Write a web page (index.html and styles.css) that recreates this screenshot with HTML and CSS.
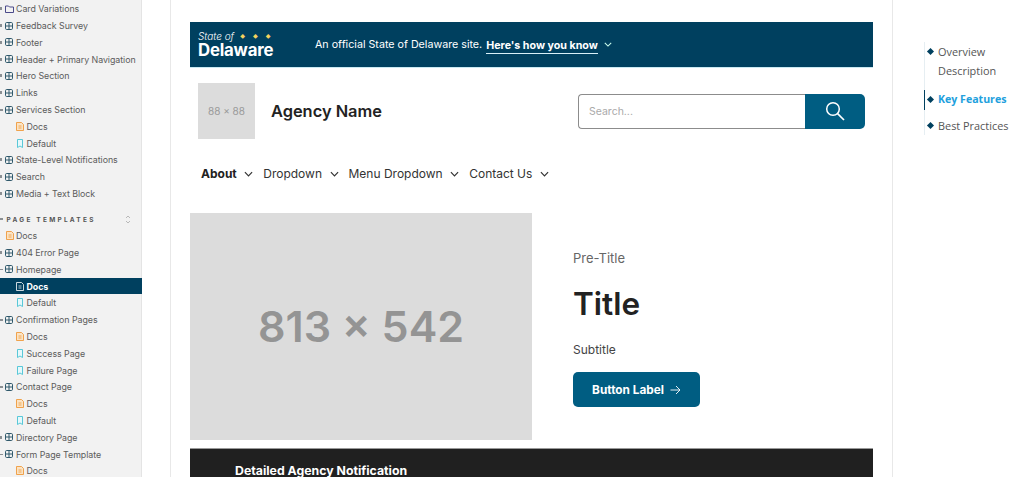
FILE: index.html
```html
<!DOCTYPE html>
<html lang="en">
<head>
<meta charset="utf-8">
<title>Homepage Docs</title>
<link rel="stylesheet" href="styles.css">
</head>
<body>
<svg class="defs" width="0" height="0" aria-hidden="true">
  <symbol id="comp" viewBox="0 0 8 8"><rect x=".5" y=".5" width="7" height="7" rx="1.2" fill="none" stroke="currentColor"/><path d="M4 .5v7M.5 4h7" stroke="currentColor" fill="none"/></symbol>
  <symbol id="doc" viewBox="0 0 8 9"><path d="M.5.5h5l2 2v6h-7z" fill="#fbe3c4" stroke="currentColor" stroke-width=".9"/><path d="M2.5 4h3M2.5 6h3" stroke="currentColor" stroke-width=".8"/></symbol>
  <symbol id="doc-on" viewBox="0 0 8 9"><path d="M.5.5h5l2 2v6h-7z" fill="none" stroke="currentColor" stroke-width=".8"/><path d="M2.500 4h3M2.500 6h3" stroke="currentColor" stroke-width=".7"/></symbol>
  <symbol id="story" viewBox="0 0 6 9"><path d="M.5.5h5v8l-2.5-1.5-2.5 1.5z" fill="#e6f8fb" stroke="currentColor" stroke-width=".9"/></symbol>
  <symbol id="folder" viewBox="0 0 9 8"><path d="M.5 1h3l1 1h4v5.500h-8z" fill="none" stroke="currentColor"/></symbol>
  <symbol id="chev" viewBox="0 0 10 6"><path d="M1 1l4 4 4-4" fill="none" stroke="currentColor" stroke-width="1.300"/></symbol>
  <symbol id="updown" viewBox="0 0 6 9"><path d="M1 3l2-2 2 2M1 6l2 2 2-2" fill="none" stroke="currentColor" stroke-width=".8"/></symbol>
</svg>
<div class="app">
  <nav class="sidebar">
    <a class="row"><i class="caret"></i><svg class="ic folder"><use href="#folder"/></svg>Card Variations</a>
    <a class="row"><i class="caret"></i><svg class="ic comp"><use href="#comp"/></svg>Feedback Survey</a>
    <a class="row"><i class="caret"></i><svg class="ic comp"><use href="#comp"/></svg>Footer</a>
    <a class="row"><i class="caret"></i><svg class="ic comp"><use href="#comp"/></svg>Header + Primary Navigation</a>
    <a class="row"><i class="caret"></i><svg class="ic comp"><use href="#comp"/></svg>Hero Section</a>
    <a class="row"><i class="caret"></i><svg class="ic comp"><use href="#comp"/></svg>Links</a>
    <a class="row"><i class="caret open"></i><svg class="ic comp"><use href="#comp"/></svg>Services Section</a>
    <a class="row sub"><svg class="ic doc"><use href="#doc"/></svg>Docs</a>
    <a class="row sub"><svg class="ic story"><use href="#story"/></svg>Default</a>
    <a class="row"><i class="caret"></i><svg class="ic comp"><use href="#comp"/></svg>State-Level Notifications</a>
    <a class="row"><i class="caret"></i><svg class="ic comp"><use href="#comp"/></svg>Search</a>
    <a class="row"><i class="caret"></i><svg class="ic comp"><use href="#comp"/></svg>Media + Text Block</a>
    <div class="group"><i class="caret open"></i><span>PAGE TEMPLATES</span><svg class="updown"><use href="#updown"/></svg></div>
    <a class="row top"><svg class="ic doc"><use href="#doc"/></svg>Docs</a>
    <a class="row"><i class="caret"></i><svg class="ic comp"><use href="#comp"/></svg>404 Error Page</a>
    <a class="row"><i class="caret open"></i><svg class="ic comp"><use href="#comp"/></svg>Homepage</a>
    <a class="row sub active"><svg class="ic doc"><use href="#doc-on"/></svg>Docs</a>
    <a class="row sub"><svg class="ic story"><use href="#story"/></svg>Default</a>
    <a class="row"><i class="caret open"></i><svg class="ic comp"><use href="#comp"/></svg>Confirmation Pages</a>
    <a class="row sub"><svg class="ic doc"><use href="#doc"/></svg>Docs</a>
    <a class="row sub"><svg class="ic story"><use href="#story"/></svg>Success Page</a>
    <a class="row sub"><svg class="ic story"><use href="#story"/></svg>Failure Page</a>
    <a class="row"><i class="caret open"></i><svg class="ic comp"><use href="#comp"/></svg>Contact Page</a>
    <a class="row sub"><svg class="ic doc"><use href="#doc"/></svg>Docs</a>
    <a class="row sub"><svg class="ic story"><use href="#story"/></svg>Default</a>
    <a class="row"><i class="caret"></i><svg class="ic comp"><use href="#comp"/></svg>Directory Page</a>
    <a class="row"><i class="caret open"></i><svg class="ic comp"><use href="#comp"/></svg>Form Page Template</a>
    <a class="row sub"><svg class="ic doc"><use href="#doc"/></svg>Docs</a>
  </nav>
  <main class="canvas">
    <article class="panel">
      <div class="banner">
        <div class="logo">
          <div class="logo-top"><em>State of</em><span class="stars">&#9670;&#9670;&#9670;</span></div>
          <div class="logo-name">Delaware</div>
        </div>
        <p class="official">An official State of Delaware site. <b>Here's how you know</b><svg class="chev-sm"><use href="#chev"/></svg></p>
      </div>
      <header class="masthead">
        <div class="brand">
          <div class="ph-logo">88 × 88</div>
          <div class="agency">Agency Name</div>
        </div>
        <form class="search">
          <div class="search-input">Search...</div>
          <div class="search-btn"><svg width="20" height="20" viewBox="0 0 20 20"><circle cx="8" cy="8" r="6.300" fill="none" stroke="#fff" stroke-width="1.500"/><path d="M12.600 12.600L19 19" stroke="#fff" stroke-width="1.700" fill="none"/></svg></div>
        </form>
      </header>
      <ul class="menu">
        <li class="cur">About<svg class="chev"><use href="#chev"/></svg></li>
        <li>Dropdown<svg class="chev"><use href="#chev"/></svg></li>
        <li>Menu Dropdown<svg class="chev"><use href="#chev"/></svg></li>
        <li>Contact Us<svg class="chev"><use href="#chev"/></svg></li>
      </ul>
      <section class="hero">
        <div class="ph-hero">813 × 542</div>
        <div class="hero-copy">
          <div class="pre">Pre-Title</div>
          <h1>Title</h1>
          <div class="subtitle">Subtitle</div>
          <a class="btn">Button Label<svg width="11" height="10" viewBox="0 0 11 10"><path d="M.5 5h9.500M6 1l4 4-4 4" fill="none" stroke="#fff" stroke-width=".9"/></svg></a>
        </div>
      </section>
      <div class="notice">Detailed Agency Notification</div>
    </article>
    <aside class="toc">
      <ul>
        <li>Overview Description</li>
        <li class="on">Key Features</li>
        <li>Best Practices</li>
      </ul>
    </aside>
  </main>
</div>
</body>
</html>
```
FILE: styles.css
```css
* { box-sizing: border-box; }
html, body { margin: 0; height: 477px; overflow: hidden; background: #fff; }
body { font-family: "Inter", "Liberation Sans", sans-serif; color: #222; }
.defs { position: absolute; }
.app { display: flex; height: 477px; overflow: hidden; }

.sidebar { width: 142px; flex: none; background: #f2f2f2; border-right: 1px solid #e4e4e4; padding-top: .3px; font-size: 8.850px; color: #5c5c5c; }
.row { display: flex; align-items: center; height: 16.800px; padding-left: 16px; white-space: nowrap; position: relative; letter-spacing: -.05px; }
.row.sub { padding-left: 26.500px; }
.row.active { background: #00405f; color: #fff; font-weight: 700; margin-right: -1px; }
.row.active .doc { color: #fff; }
.caret { position: absolute; left: 0; top: 7px; width: 2px; height: 3px; background: #8a8f93; }
.caret.open { width: 3px; height: 1.500px; top: 8px; }
.ic { flex: none; position: absolute; }
.comp { left: 5px; top: 4.500px; width: 8px; height: 8px; color: #315a6c; }
.folder { left: 5px; top: 4.500px; width: 9px; height: 8px; color: #4b4a8a; }
.doc { left: 16px; top: 4px; width: 8px; height: 9px; color: #ee9a3b; }
.row.top .doc { left: 6px; }
.story { left: 17px; top: 4px; width: 6px; height: 9px; color: #48c3d4; }
.group { height: 25.400px; padding: 14px 0 0 6.500px; font-size: 6.500px; font-weight: 700; letter-spacing: 2.250px; color: #555; position: relative; display: flex; }
.group .caret { top: 16.500px; }
.updown { position: absolute; left: 125px; top: 13.500px; width: 6px; height: 9px; color: #aaa; }

.canvas { flex: 1; display: flex; align-items: flex-start; min-width: 0; background: #fff; }
.panel { width: 723px; margin-left: 28px; height: 477px; flex: none; padding: 22px 19px 0 19px; border-left: 1px solid #e8e8e8; border-right: 1px solid #e8e8e8; overflow: hidden; }

.banner { height: 45px; background: #00405f; display: flex; align-items: center; padding-left: 8px; color: #fff; box-shadow: 0 1px 0 #c9e9f2; }
.logo { width: 117px; flex: none; }
.logo-top { display: flex; align-items: center; gap: 6px; font-size: 10px; line-height: 11px; }
.logo-top em { font-weight: 300; }
.stars { color: #f4d35e; font-size: 5px; letter-spacing: 7.500px; }
.logo-name { font-size: 16.800px; font-weight: 700; line-height: 16px; letter-spacing: -.2px; }
.official { margin: 0; font-size: 10.700px; display: flex; align-items: center; gap: 3px; white-space: nowrap; }
.official b { border-bottom: 1px solid #d8f0f8; padding: 3px 0 1px; margin-left: 1px; }
.chev-sm { width: 8px; height: 5px; margin-left: 3px; color: #cfe; }

.masthead { display: flex; justify-content: space-between; align-items: center; padding: 16px 8px 0 8px; }
.brand { display: flex; align-items: center; gap: 16px; }
.ph-logo { width: 57px; height: 56px; background: #dcdcdc; color: #999; font-size: 10px; display: flex; align-items: center; justify-content: center; }
.agency { font-size: 16.400px; font-weight: 600; color: #222; }
.search { display: flex; width: 287px; height: 35px; }
.search-input { flex: 1; border: 1px solid #8c8c8c; border-right: 0; border-radius: 4px 0 0 4px; padding: 0 0 0 10px; font-size: 10.500px; color: #aaa; display: flex; align-items: center; }
.search-btn { width: 60px; background: #005d82; border-radius: 0 5px 5px 0; display: flex; align-items: center; justify-content: center; }

.menu { list-style: none; margin: 0; padding: 27px 0 0 11px; display: flex; gap: 10px; font-size: 12px; line-height: 16px; color: #333; height: 74px; }
.menu li { display: flex; align-items: center; height: 16px; gap: 7.500px; white-space: nowrap; }
.menu .cur { font-weight: 700; color: #222; }
.chev { width: 9px; height: 6px; color: #333; }

.hero { display: flex; gap: 41px; }
.ph-hero { width: 342px; height: 227px; padding-bottom: 2px; background: #dcdcdc; color: #949494; font-size: 43px; font-weight: 600; display: flex; align-items: center; justify-content: center; flex: none; }
.hero-copy { padding-top: 37px; }
.pre { font-size: 13px; color: #666; line-height: 16px; }
h1 { margin: 19px 0 0; font-size: 31.500px; line-height: 38px; font-weight: 600; color: #222; }
.subtitle { margin-top: 19px; font-size: 12px; color: #444; line-height: 16px; }
.btn { margin-top: 14px; width: 127px; height: 35px; background: #005d82; border-radius: 5px; color: #fff; font-size: 11.800px; font-weight: 700; display: flex; align-items: center; justify-content: center; gap: 6px; }

.notice { margin-top: 8px; height: 40px; background: #202020; border-top: 1px solid #999; color: #fff; font-size: 12.300px; font-weight: 700; line-height: 16px; padding: 14px 0 0 45px; }

.toc { flex: 1; padding: 42px 0 0 31px; }
.toc ul { list-style: none; margin: 0; padding: 0; border-left: 1px solid #e6eef2; font-family: "Open Sans", sans-serif; font-size: 10.900px; color: #555; width: 99px; }
.toc li { position: relative; padding: 0 0 0 13px; line-height: 19px; margin-bottom: 10px; }
.toc li::before { content: ""; position: absolute; left: 3px; top: 7px; width: 5px; height: 5px; background: #00405f; transform: rotate(45deg); }
.toc .on { color: #22a0dd; font-weight: 700; margin-left: -1px; margin-bottom: 6px; border-left: 1px solid #00405f; padding-left: 13px; height: 20px; font-size: 10.600px; }
.toc li:last-child { margin-bottom: 0; }
```
